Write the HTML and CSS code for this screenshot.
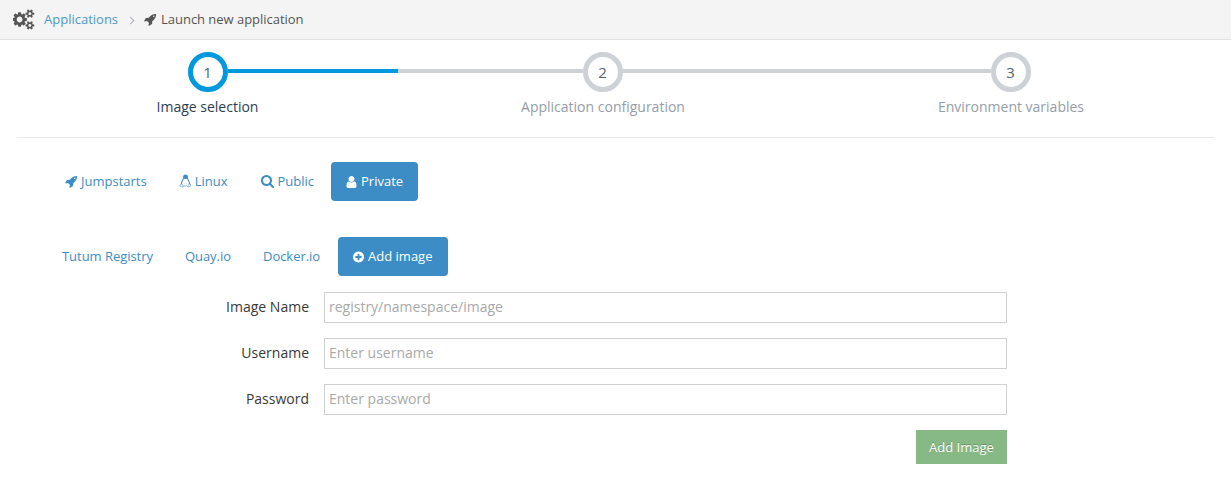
FILE: index.html
```html
<!DOCTYPE html>
<html lang="en">
<head>
<meta charset="utf-8">
<title>Launch new application</title>
<link rel="stylesheet" href="styles.css">
</head>
<body>
<svg class="sprite" aria-hidden="true">
  <symbol id="rocket" viewBox="0 0 1792 1792"><path d="M1440 448q0-40-28-68t-68-28-68 28-28 68 28 68 68 28 68-28 28-68zm224-288q0 249-75.500 430.500t-253.500 360.500q-81 80-195 176l-20 379q-2 16-16 26l-384 224q-7 4-16 4-12 0-23-9l-64-64q-13-14-8-32l85-276-281-281-276 85q-3 1-9 1-14 0-23-9l-64-64q-17-19-5-39l224-384q10-14 26-16l379-20q96-114 176-195 188-187 358-258t431-71q14 0 24 9.500t10 22.500z"/></symbol>
</svg>
<header class="crumbs">
  <svg class="cogs" viewBox="0 0 1920 1792"><path d="M832 896q0-106-75-181t-181-75-181 75-75 181 75 181 181 75 181-75 75-181zm768 512q0-52-38-90t-90-38-90 38-38 90q0 53 37.500 90.500t90.500 37.500 90.500-37.500 37.500-90.500zm0-1024q0-52-38-90t-90-38-90 38-38 90q0 53 37.500 90.500t90.500 37.500 90.500-37.500 37.500-90.500zm-384 421v185q0 10-7 19.500t-16 10.500l-155 24q-11 35-32 76 34 48 90 115 7 11 7 20 0 12-7 19-23 30-82.500 89.500t-78.500 59.500q-11 0-21-7l-115-90q-37 19-77 31-11 108-23 155-7 24-30 24h-186q-11 0-20-7.500t-10-17.500l-23-153q-34-10-75-31l-118 89q-7 7-20 7-11 0-21-8-144-133-144-160 0-9 7-19 10-14 41-53t47-61q-23-44-35-82l-152-24q-10-1-17-9.500t-7-19.500v-185q0-10 7-19.500t16-10.500l155-24q11-35 32-76-34-48-90-115-7-11-7-20 0-12 7-20 22-30 82-89t79-59q11 0 21 7l115 90q34-18 77-32 11-108 23-154 7-24 30-24h186q11 0 20 7.500t10 17.500l23 153q34 10 75 31l118-89q8-7 20-7 11 0 21 8 144 133 144 160 0 8-7 19-12 16-42 54t-45 60q23 48 34 82l152 23q10 2 17 10.500t7 19.500zm640 533v140q0 16-149 31-12 27-30 52 51 113 51 138 0 4-4 7-122 71-124 71-8 0-46-47t-52-68q-20 2-30 2t-30-2q-14 21-52 68t-46 47q-2 0-124-71-4-3-4-7 0-25 51-138-18-25-30-52-149-15-149-31v-140q0-16 149-31 13-29 30-52-51-113-51-138 0-4 4-7 4-2 35-20t59-34 30-16q8 0 46 46.500t52 67.500q20-2 30-2t30 2q51-71 92-112l6-2q4 0 124 70 4 3 4 7 0 25-51 138 17 23 30 52 149 15 149 31zm0-1024v140q0 16-149 31-12 27-30 52 51 113 51 138 0 4-4 7-122 71-124 71-8 0-46-47t-52-68q-20 2-30 2t-30-2q-14 21-52 68t-46 47q-2 0-124-71-4-3-4-7 0-25 51-138-18-25-30-52-149-15-149-31v-140q0-16 149-31 13-29 30-52-51-113-51-138 0-4 4-7 4-2 35-20t59-34 30-16q8 0 46 46.500t52 67.500q20-2 30-2t30 2q51-71 92-112l6-2q4 0 124 70 4 3 4 7 0 25-51 138 17 23 30 52 149 15 149 31z"/></svg>
  <a class="crumb-link" href="#">Applications</a>
  <svg class="chevron" viewBox="0 0 6 10"><path d="M1 1l4 4-4 4"/></svg>
  <svg class="icon crumb-icon"><use href="#rocket"/></svg>
  <span class="crumb-current">Launch new application</span>
</header>

<ol class="steps">
  <li class="step active">
    <div class="track"><span class="line none"></span><span class="dot">1</span><span class="line"></span></div>
    <div class="step-label">Image selection</div>
  </li>
  <li class="step">
    <div class="track"><span class="line"></span><span class="dot">2</span><span class="line"></span></div>
    <div class="step-label">Application configuration</div>
  </li>
  <li class="step">
    <div class="track"><span class="line"></span><span class="dot">3</span><span class="line none"></span></div>
    <div class="step-label">Environment variables</div>
  </li>
</ol>

<nav class="pills sources">
  <a class="pill" href="#"><svg class="icon"><use href="#rocket"/></svg>Jumpstarts</a>
  <a class="pill linux" href="#"><svg class="icon" viewBox="0 0 14 14"><path class="tux" d="M5 3.200C5 1.400 5.700.6 7 .6s2 .9 2 2.600c0 2 2.500 3.800 2.500 7.300M5 3.200c0 2-2.500 4-2.500 7.300"/><path class="tux thin" d="M4.800 12.300h4.400M2.600 9.900l2.200 2.800-.6.800-3.100-.8.300-2.100zM11.400 9.900l-2.200 2.800.7.800 2.900-1.300-.5-1.800z"/><path d="M4.800 2.500Q4.700.2 7 .2t2.300 2.300v1.600L7 5 4.800 4.100z"/></svg>Linux</a>
  <a class="pill public" href="#"><svg class="icon" viewBox="64 128 1664 1664"><path d="M1216 832q0-185-131.500-316.500t-316.500-131.500-316.500 131.500-131.500 316.500 131.500 316.500 316.500 131.500 316.500-131.500 131.500-316.500zm512 832q0 52-38 90t-90 38q-54 0-90-38l-343-342q-179 124-399 124-143 0-273.500-55.500t-225-150-150-225-55.500-273.500 55.500-273.500 150-225 225-150 273.500-55.500 273.500 55.500 225 150 150 225 55.500 273.500q0 220-124 399l343 343q37 37 37 90z"/></svg>Public</a>
  <a class="pill selected" href="#"><svg class="icon" viewBox="192 128 1408 1536"><path d="M1536 1399q0 109-62.500 187t-150.500 78h-854q-88 0-150.500-78t-62.500-187q0-85 8.500-160.500t31.500-152 58.500-131 94-89 134.500-34.500q131 128 313 128t313-128q76 0 134.500 34.500t94 89 58.500 131 31.500 152 8.500 160.500zm-256-887q0 159-112.500 271.500t-271.500 112.500-271.500-112.500-112.500-271.500 112.500-271.500 271.500-112.500 271.500 112.500 112.500 271.500z"/></svg>Private</a>
</nav>

<nav class="pills registries">
  <a class="pill" href="#">Tutum Registry</a>
  <a class="pill" href="#">Quay.io</a>
  <a class="pill" href="#">Docker.io</a>
  <a class="pill selected" href="#"><svg class="icon" viewBox="128 128 1536 1536"><path d="M1344 960v-128q0-26-19-45t-45-19h-256v-256q0-26-19-45t-45-19h-128q-26 0-45 19t-19 45v256h-256q-26 0-45 19t-19 45v128q0 26 19 45t45 19h256v256q0 26 19 45t45 19h128q26 0 45-19t19-45v-256h256q26 0 45-19t19-45zm320-64q0 209-103 385.500t-279.500 279.500-385.500 103-385.500-103-279.500-279.500-103-385.500 103-385.500 279.500-279.500 385.500-103 385.500 103 279.500 279.500 103 385.500z"/></svg>Add image</a>
</nav>

<form class="form">
  <label class="label" for="image">Image Name</label>
  <input class="field" id="image" type="text" placeholder="registry/namespace/image">
  <label class="label" for="user">Username</label>
  <input class="field" id="user" type="text" placeholder="Enter username">
  <label class="label" for="pass">Password</label>
  <input class="field" id="pass" type="password" placeholder="Enter password">
  <button class="submit" type="button">Add Image</button>
</form>
</body>
</html>
```

FILE: styles.css
```css
* { box-sizing: border-box; }
body {
  margin: 0;
  background: #fff;
  color: #393939;
  font-family: "Open Sans", sans-serif;
  font-size: 13px;
  line-height: 19px;
}
a { color: #3c8dc5; text-decoration: none; }
svg { flex: none; fill: currentColor; }
.sprite { display: none; }
.icon { width: 13px; height: 13px; }

.crumbs {
  display: flex;
  align-items: center;
  height: 40px;
  padding: 0 0 1px 13px;
  background: #f4f4f4;
  border-bottom: 1px solid #e1e1e1;
  color: #555;
}
.cogs { width: 22px; height: 21px; margin-right: 9px; }
.crumb-link { color: #4c9bc4; }
.chevron {
  width: 6px;
  height: 9px;
  margin: 2px 9px 0 11px;
  fill: none;
  stroke: #b2b6bf;
  stroke-width: 1.3;
}
.crumb-icon { margin-right: 4px; }
.crumb-current { letter-spacing: -.03px; }

.steps {
  display: grid;
  grid-template-columns: 381px 409px 407px;
  height: 98px;
  margin: 0 17px;
  padding: 12px 0 0;
  list-style: none;
  border-bottom: 1px solid #eaeaea;
}
.track { display: flex; }
.line { flex: 1; height: 4px; margin-top: 17px; background: #ced1d6; }
.active .line { background: #0099e0; }
.line.none { background: none; }
.dot {
  width: 40px;
  height: 40px;
  border: 5px solid #ced1d6;
  border-radius: 50%;
  color: #546474;
  font-size: 15px;
  line-height: 31px;
  text-align: center;
}
.active .dot { border-color: #0099e0; }
.step-label {
  margin-top: 5px;
  padding-left: 1px;
  color: #949ea7;
  font-size: 14px;
  line-height: 20px;
  text-align: center;
}
.active .step-label { padding-left: 0; color: #2b3d53; }

.pills { display: flex; gap: 2px; margin-left: 47px; }
.sources { margin-top: 24px; margin-left: 50px; }
.registries { margin-top: 36px; }
.registries .pill:not(.selected) { letter-spacing: -.04px; }
.pill {
  display: flex;
  align-items: center;
  height: 39px;
  padding: 0 15px;
  border-radius: 4px;
}
.pill .icon { margin-right: 3px; }
.linux .icon { height: 14px; margin-top: -1px; }
.public { margin-left: 2px; }
.tux { fill: none; stroke: currentColor; stroke-width: 1.100; }
.thin { stroke-width: .6; }
.pill.selected { background: #3c8dc5; color: #fff; }
.pill.selected .icon { width: 11px; height: 12px; margin-right: 4px; }
.registries .pill.selected { width: 110px; margin-left: 1px; }

.form {
  display: grid;
  grid-template-columns: 309px 683px;
  column-gap: 15px;
  row-gap: 15px;
  margin-top: 16px;
}
.label { font-size: 14px; line-height: 30px; text-align: right; }
.field {
  height: 31px;
  padding: 0 4px 2px;
  border: 1px solid #d0d0d0;
  background: #fff;
  font: 14px "Open Sans", sans-serif;
}
.field::placeholder { color: #a9a9a9; }
.submit {
  grid-column: 2;
  justify-self: end;
  width: 91px;
  height: 34px;
  padding: 0;
  border: 0;
  background: #87b987;
  color: #fff;
  font: 13px "Open Sans", sans-serif;
  text-shadow: 0 -1px 0 rgba(0, 0, 0, .25);
}
```
